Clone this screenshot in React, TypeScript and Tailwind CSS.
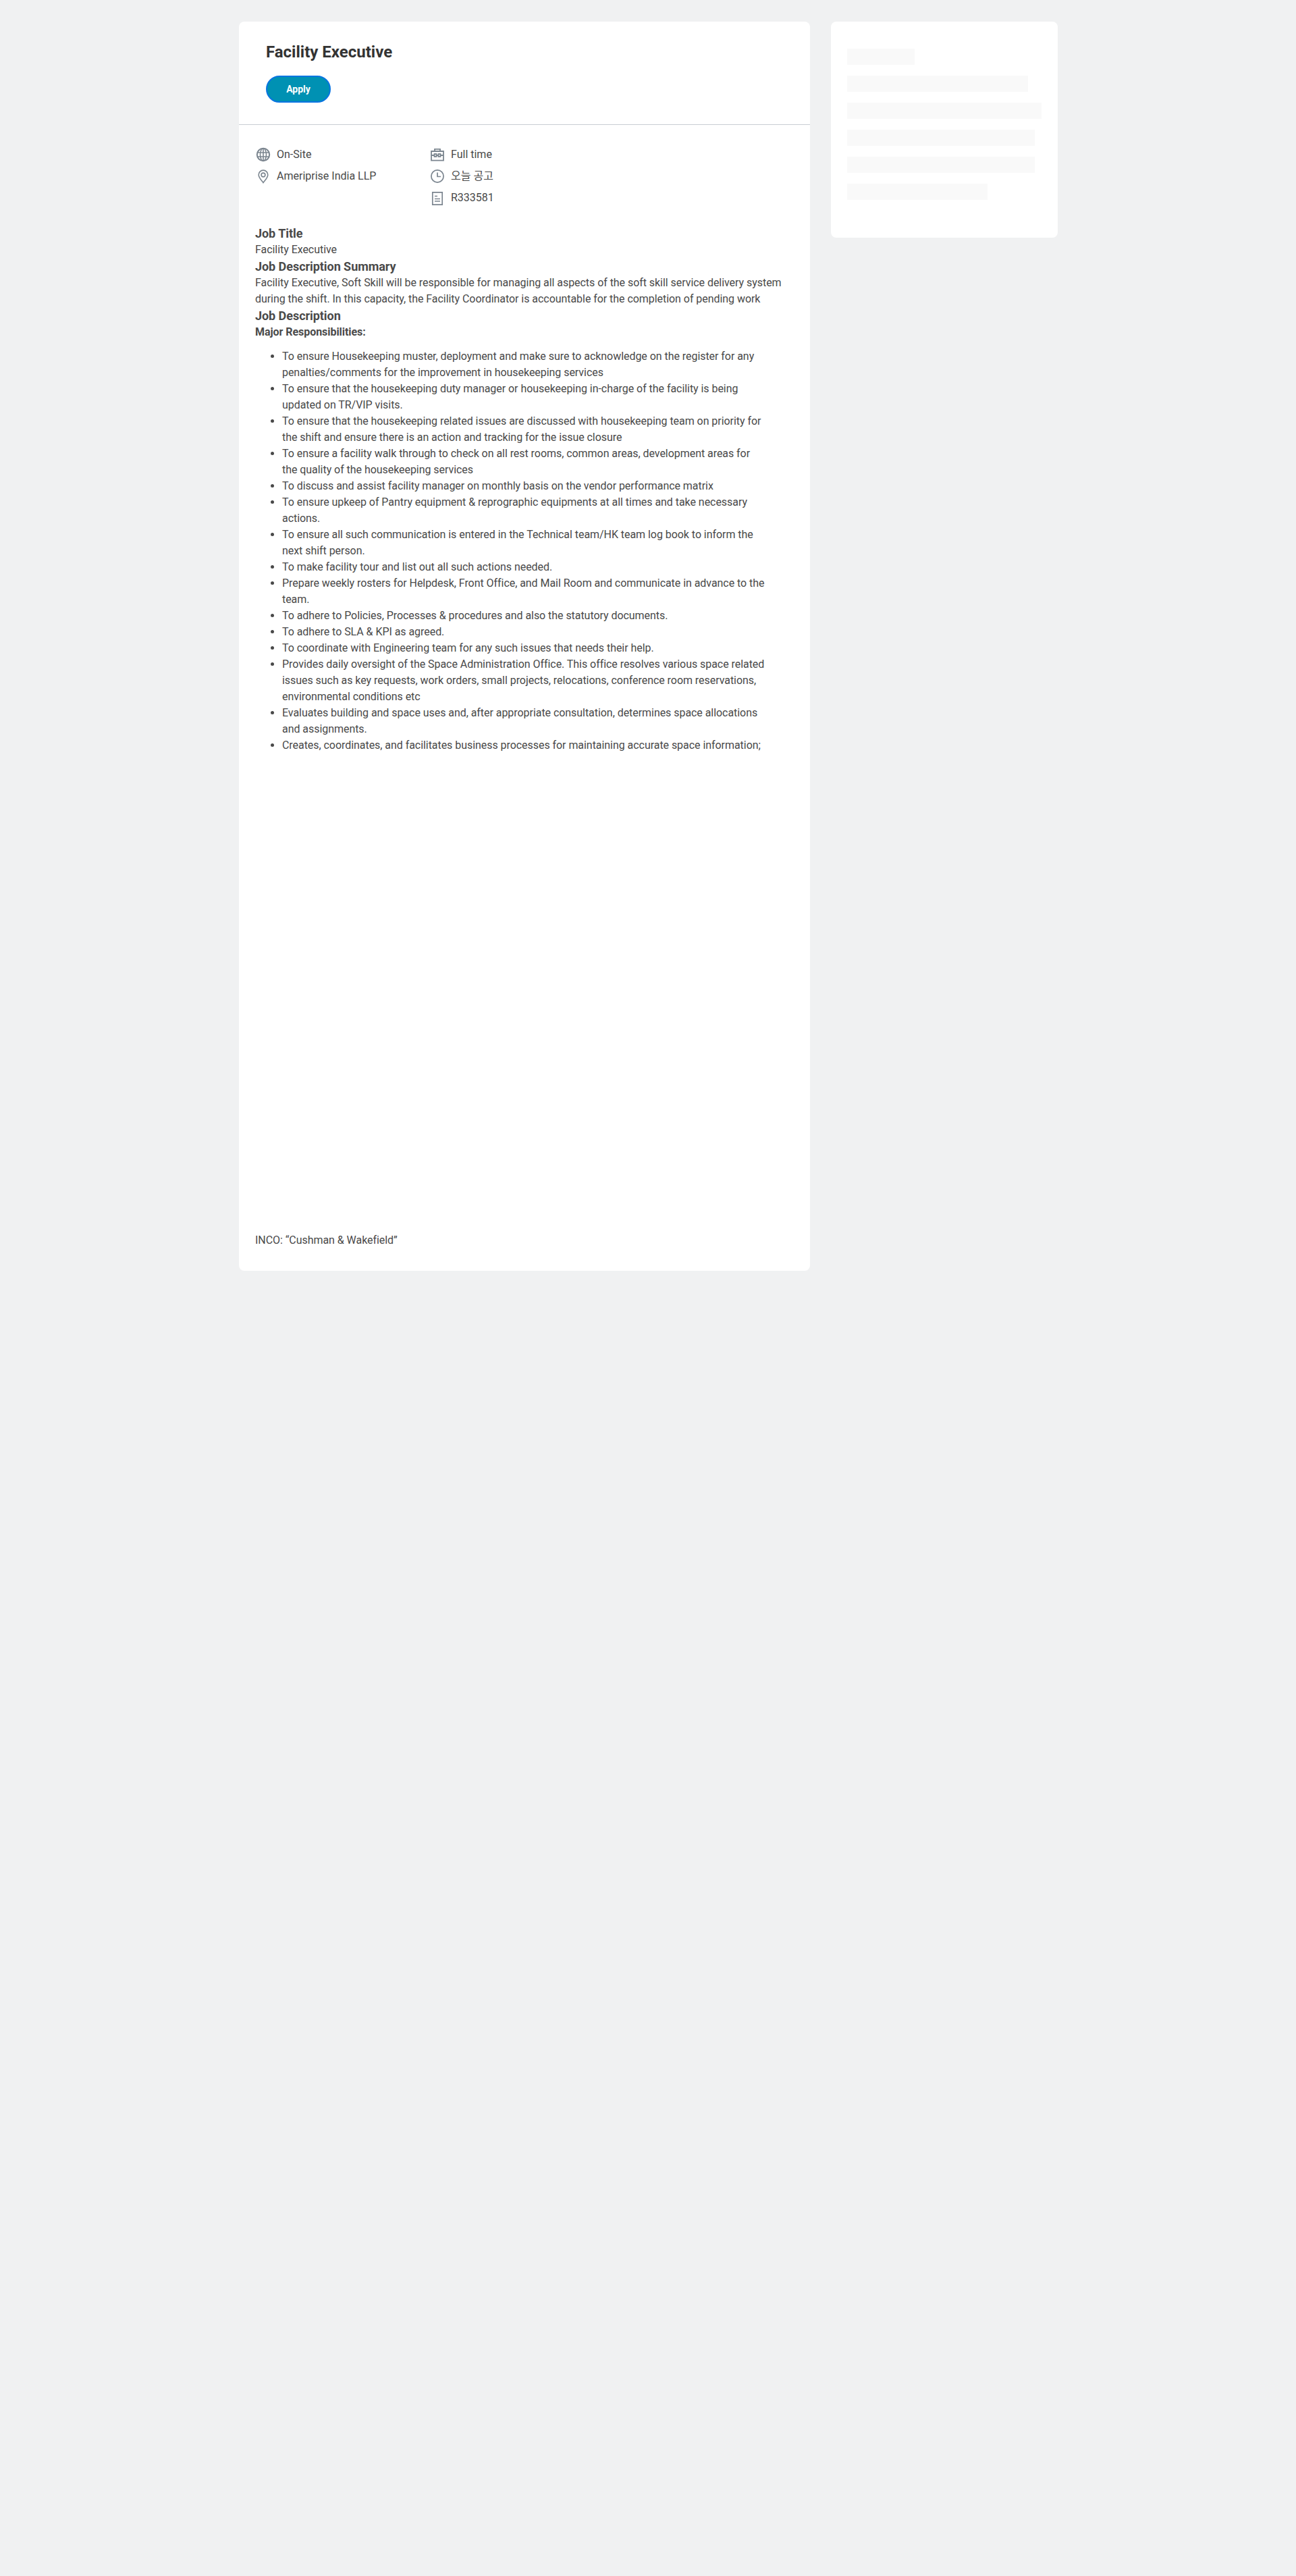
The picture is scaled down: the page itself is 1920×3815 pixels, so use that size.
import React from "react";

const items = [
  "To ensure Housekeeping muster, deployment and make sure to acknowledge on the register for any penalties/comments for the improvement in housekeeping services",
  "To ensure that the housekeeping duty manager or housekeeping in-charge of the facility is being updated on TR/VIP visits.",
  "To ensure that the housekeeping related issues are discussed with housekeeping team on priority for the shift and ensure there is an action and tracking for the issue closure",
  "To ensure a facility walk through to check on all rest rooms, common areas, development areas for the quality of the housekeeping services",
  "To discuss and assist facility manager on monthly basis on the vendor performance matrix",
  "To ensure upkeep of Pantry equipment & reprographic equipments at all times and take necessary actions.",
  "To ensure all such communication is entered in the Technical team/HK team log book to inform the next shift person.",
  "To make facility tour and list out all such actions needed.",
  "Prepare weekly rosters for Helpdesk, Front Office, and Mail Room and communicate in advance to the team.",
  "To adhere to Policies, Processes & procedures and also the statutory documents.",
  "To adhere to SLA & KPI as agreed.",
  "To coordinate with Engineering team for any such issues that needs their help.",
  "Provides daily oversight of the Space Administration Office. This office resolves various space related issues such as key requests, work orders, small projects, relocations, conference room reservations, environmental conditions etc",
  "Evaluates building and space uses and, after appropriate consultation, determines space allocations and assignments.",
  "Creates, coordinates, and facilitates business processes for maintaining accurate space information;",
];

const Globe = () => (
  <svg width="24" height="24" viewBox="0 0 24 24" fill="none" stroke="#7b858f" strokeWidth="1.6">
    <circle cx="12" cy="12" r="9.2" strokeWidth="2" />
    <ellipse cx="12" cy="12" rx="4.5" ry="9.2" />
    <path d="M12 3v18M3 9h18M3 15h18" />
  </svg>
);
const Pin = () => (
  <svg width="24" height="24" viewBox="0 0 24 24" fill="none" stroke="#7b858f" strokeWidth="1.6">
    <path d="M12 21.5c-1.2-1.8-6.8-7.2-6.8-11.6a6.8 6.8 0 0 1 13.6 0c0 4.4-5.6 9.8-6.8 11.6z" />
    <circle cx="12" cy="10" r="2.9" />
  </svg>
);
const Case = () => (
  <svg width="24" height="24" viewBox="0 0 24 24" fill="none" stroke="#7b858f" strokeWidth="1.8">
    <path d="M3 7h18v13.6H3zM8 7V3.9h8V7M3 13h4.5M10.5 13h3M16.5 13h4.5" />
    <rect x="7.5" y="11" width="3" height="4" />
    <rect x="13.5" y="11" width="3" height="4" />
  </svg>
);
const Clock = () => (
  <svg width="24" height="24" viewBox="0 0 24 24" fill="none" stroke="#7b858f" strokeWidth="1.7">
    <circle cx="12" cy="12" r="9.1" />
    <path d="M12 6.5V12.5h5" />
  </svg>
);
const Doc = () => (
  <svg width="24" height="24" viewBox="0 0 24 24" fill="none" stroke="#7b858f" strokeWidth="1.7">
    <path d="M4.8 3.8h14.4v18.4H4.8z" />
    <path d="M8 9.5h4M8 13.5h8M8 17h8" />
  </svg>
);

function Meta({ icon, text }: { icon: React.ReactNode; text: string }) {
  return (
    <div className="flex items-center h-[24px] mb-[8px]">
      <span className="w-[24px] h-[24px] mr-[8px] shrink-0">{icon}</span>
      <span className="text-[16px] leading-[24px] text-[#494949]">{text}</span>
    </div>
  );
}

const skeletons = ["w-[100px]", "w-[268px]", "w-[288px]", "w-[278px]", "w-[278px]", "w-[208px]"];

export default function App() {
  return (
    <div
      className="w-full min-h-[3815px] bg-[#f0f1f2] pt-[32px] pl-[354px] flex items-start gap-[31px]"
      style={{ fontFamily: 'Roboto, "Noto Sans CJK KR", sans-serif' }}
    >
      <main className="w-[846px] bg-white rounded-[8px] pb-[33px]">
        <header className="px-[40px] pt-[25px] h-[153px] border-b border-[#c9cdd3]">
          <h1 className="text-[24px] leading-[40px] font-bold text-[#333333]">Facility Executive</h1>
          <button className="mt-[15px] w-[96px] h-[40px] rounded-[20px] bg-[#0091b3] border-2 border-[#0875e1] text-white text-[14px] font-bold">
            Apply
          </button>
        </header>
        <div className="px-[24px] pt-[32px]">
          <div className="flex">
            <div className="w-[258px]">
              <Meta icon={<Globe />} text="On-Site" />
              <Meta icon={<Pin />} text="Ameriprise India LLP" />
            </div>
            <div>
              <Meta icon={<Case />} text="Full time" />
              <Meta icon={<Clock />} text="오늘 공고" />
              <Meta icon={<Doc />} text="R333581" />
            </div>
          </div>
          <div className="mt-[20px] text-[16px] leading-[24px] tracking-[-0.05px] text-[#494949]">
            <h2 className="text-[18px] leading-[25px] font-bold">Job Title</h2>
            <p>Facility Executive</p>
            <h2 className="text-[18px] leading-[25px] font-bold">Job Description Summary</h2>
            <p className="w-[798px]">
              Facility Executive, Soft Skill will be responsible for managing all aspects of the soft skill service delivery system during the shift. In this capacity, the Facility Coordinator is accountable for the completion of pending work
            </p>
            <h2 className="text-[18px] leading-[25px] font-bold">Job Description</h2>
            <p className="font-bold">Major Responsibilities:</p>
            <ul className="list-disc pl-[40px] mt-[12px] w-[756px]">
              {items.map((t) => (
                <li key={t}>{t}</li>
              ))}
            </ul>
            <p className="mt-[709px]">INCO: “Cushman &amp; Wakefield”</p>
          </div>
        </div>
      </main>
      <aside className="w-[336px] h-[320px] bg-white rounded-[8px] px-[24px] pt-[40px] flex flex-col gap-[16px]">
        {skeletons.map((w, i) => (
          <div key={i} className={`${w} h-[24px] bg-[#f9f9f9]`} />
        ))}
      </aside>
    </div>
  );
}
